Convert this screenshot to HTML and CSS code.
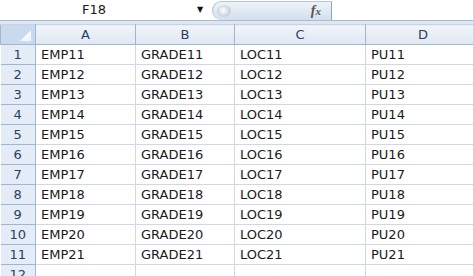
FILE: index.html
```html
<!DOCTYPE html>
<html lang="en">
<head>
    <meta charset="UTF-8">
    <title>Sheet1</title>
    <link rel="stylesheet" href="styles.css">
</head>
<body>
    <div class="formula-bar">
        <div class="name-box">F18</div>
        <div class="name-drop">&#9660;</div>
        <div class="fx-band">
            <span class="fx-knob"></span>
            <span class="fx">f<i>x</i></span>
        </div>
        <div class="formula-input"></div>
    </div>
    <div class="bar-gap"></div>

    <table class="sheet">
        <colgroup>
            <col class="c-num"><col class="c-a"><col class="c-b"><col class="c-c"><col class="c-d">
        </colgroup>
        <thead>
            <tr>
                <th class="corner"><span class="tri"></span></th>
                <th>A</th><th>B</th><th>C</th><th>D</th>
            </tr>
        </thead>
        <tbody id="rows"></tbody>
    </table>

    <script>
        var body = document.getElementById('rows');
        for (var i = 1; i <= 12; i++) {
            var tr = document.createElement('tr');
            var n = i + 10;
            if (i < 12) {
                tr.innerHTML = '<th>' + i + '</th><td>EMP' + n + '</td><td>GRADE' + n +
                    '</td><td>LOC' + n + '</td><td>PU' + n + '</td>';
            } else {
                tr.innerHTML = '<th>' + i + '</th><td></td><td></td><td></td><td></td>';
            }
            body.appendChild(tr);
        }
    </script>
</body>
</html>
```

FILE: styles.css
```css
body {
    margin: 0;
    width: 473px;
    height: 276px;
    overflow: hidden;
    background: #fff;
    font-family: "DejaVu Sans", Verdana, sans-serif;
}

/* formula bar */
.formula-bar {
    display: flex;
    height: 20px;
    border-bottom: 1px solid #a9bcd4;
    background: #fff;
}
.name-box {
    width: 188px;
    text-align: center;
    font-size: 13px;
    line-height: 20px;
    color: #1a1a1a;
}
.name-drop {
    width: 24px;
    font-size: 8px;
    line-height: 20px;
    text-align: center;
    color: #111;
}
.fx-band {
    position: relative;
    width: 118px;
    margin-top: 1px;
    border-radius: 10px 0 0 10px;
    border: 1px solid #b6c6dc;
    border-right: 1px solid #8ea4c2;
    border-bottom: none;
    background: linear-gradient(#eef3f9, #d3dfee);
}
.fx-knob {
    position: absolute;
    left: 4px;
    top: 3px;
    width: 14px;
    height: 12px;
    border-radius: 50%;
    background: radial-gradient(circle at 45% 45%, #ffffff, #c5ccd6 70%, #e2e8f0);
}
.fx {
    position: absolute;
    right: 10px;
    top: 1px;
    font-family: "Liberation Serif", serif;
    font-style: italic;
    font-weight: bold;
    font-size: 14px;
    color: #555;
}
.fx i {
    font-size: 11px;
}
.formula-input {
    flex: 1;
}
.bar-gap {
    height: 3px;
    background: #dfe6ef;
}

/* grid */
.sheet {
    border-collapse: collapse;
    table-layout: fixed;
    width: 480px;
    font-size: 13px;
}
.c-num { width: 35px; }
.c-a { width: 100px; }
.c-b { width: 99px; }
.c-c { width: 131px; }
.c-d { width: 115px; }

.sheet thead th {
    height: 19px;
    padding: 0;
    font-weight: normal;
    color: #27415f;
    background: linear-gradient(#f1f5fa, #dfe7f2);
    border: 1px solid #9eb6ce;
    border-top: 1px solid #c5d3e4;
}
.sheet th.corner {
    position: relative;
    background: #c9d9ee;
}
.tri {
    position: absolute;
    right: 4px;
    bottom: 3px;
    width: 0;
    height: 0;
    border-left: 11px solid transparent;
    border-bottom: 11px solid #f4f8fd;
}
.sheet tbody th {
    height: 19px;
    padding: 0;
    font-weight: normal;
    color: #27415f;
    background: #e4ecf7;
    border: 1px solid #9eb6ce;
    border-left: none;
}
.sheet td {
    height: 19px;
    padding: 0 0 0 5px;
    color: #1a1a1a;
    border: 1px solid #d0d7e5;
    white-space: nowrap;
    overflow: hidden;
}
```
